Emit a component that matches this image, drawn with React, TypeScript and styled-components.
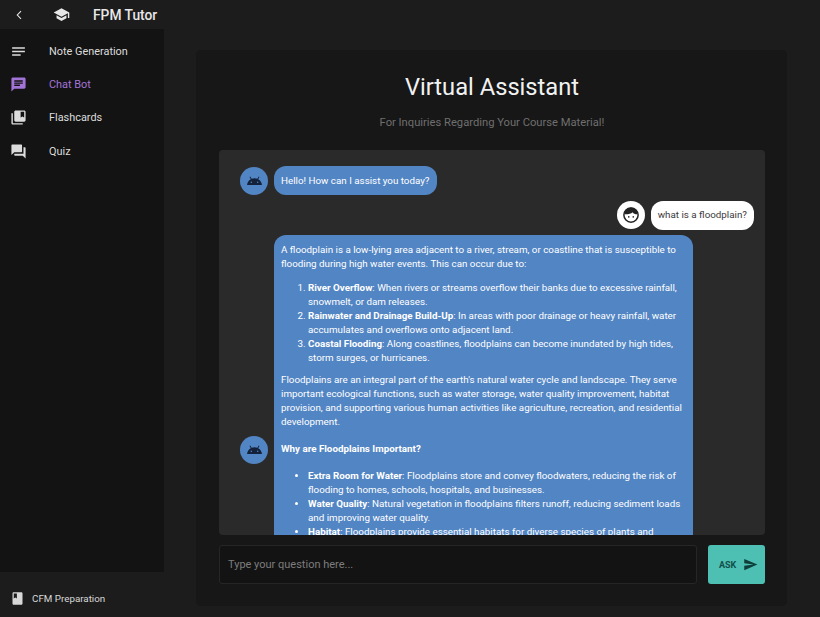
import * as React from 'react'
import styled, { createGlobalStyle } from 'styled-components'
import {
  MdArrowBackIosNew,
  MdBook,
  MdChat,
  MdCollectionsBookmark,
  MdNotes,
  MdQuestionAnswer,
  MdSchool,
  MdSend,
} from 'react-icons/md'

// ___________________________________________________________________

const GlobalStyle = createGlobalStyle`
  html, body {
    margin: 0;
    padding: 0;
    height: 617px;
    overflow: hidden;
    background: #1c1c1c;
    font-family: Roboto, "Liberation Sans", sans-serif;
  }
`

const Page = styled.div`
  width: 820px;
  height: 617px;
  display: grid;
  grid-template-columns: 164px 1fr;
  background: #1c1c1c;
  overflow: hidden;
`

const Side = styled.aside`
  display: flex;
  flex-direction: column;
  height: 617px;
`

const TopBar = styled.header`
  height: 29px;
  display: flex;
  align-items: center;
  color: #e8e8e8;
`

const BackSlot = styled.span`
  width: 38px;
  display: flex;
  justify-content: center;
  font-size: 10px;
`

const LogoSlot = styled.span`
  width: 46px;
  display: flex;
  justify-content: center;
  font-size: 17px;
`

const Brand = styled.span`
  margin-left: 9px;
  font-size: 13.8px;
  font-weight: 500;
  white-space: nowrap;
`

const Nav = styled.nav`
  flex: 1;
  background: #131313;
  padding-top: 5.5px;
`

const NavItem = styled.div<{ $active?: boolean }>`
  height: 33.3px;
  display: flex;
  align-items: center;
  gap: 22px;
  padding-left: 10px;
  font-size: 10.9px;
  color: ${p => (p.$active ? '#a274d8' : '#dcdcdc')};

  svg {
    width: 17px;
    height: 17px;
    flex: none;
  }
`

const Footer = styled.footer`
  height: 45px;
  box-sizing: border-box;
  padding: 7px 0 0 10px;
  display: flex;
  align-items: center;
  gap: 7px;
  font-size: 9.8px;
  color: #d8d8d8;

  svg {
    width: 15px;
    height: 15px;
  }
`

const Main = styled.main`
  padding: 50px 33px 11px 32px;
`

const Card = styled.section`
  height: 556px;
  box-sizing: border-box;
  padding: 22px 22px 22px 23px;
  display: flex;
  flex-direction: column;
  background: #171717;
  border-radius: 5px;
`

const Title = styled.h1`
  margin: 0;
  text-align: center;
  font-size: 23.7px;
  line-height: 30px;
  font-weight: 400;
  color: #f2f2f2;
`

const Subtitle = styled.p`
  margin: 14px 0 0;
  text-align: center;
  font-size: 11.2px;
  line-height: 14px;
  color: #6f6f6f;
`

const ChatArea = styled.div`
  margin-top: 20px;
  height: 385px;
  box-sizing: border-box;
  padding: 16px 11px 0 21px;
  background: #2a2a2a;
  border-radius: 4px;
  overflow: hidden;
  display: flex;
  flex-direction: column;
  gap: 5.5px;
`

const Row = styled.div<{ $user?: boolean }>`
  display: flex;
  flex: none;
  align-items: center;
  gap: 6px;
  justify-content: ${p => (p.$user ? 'flex-end' : 'flex-start')};
`

const Avatar = styled.div<{ $user?: boolean }>`
  width: 28px;
  height: 28px;
  flex: none;
  border-radius: 50%;
  display: flex;
  align-items: center;
  justify-content: center;
  background: ${p => (p.$user ? '#ffffff' : '#5285c4')};
`

const Bubble = styled.div<{ $user?: boolean; $wide?: boolean }>`
  box-sizing: border-box;
  padding: ${p => (p.$wide ? '7.5px 9px 7.5px 7px' : '7.5px 7px')};
  border-radius: 12px;
  font-size: 9.8px;
  line-height: 14px;
  max-width: 419px;
  background: ${p => (p.$user ? '#ffffff' : '#5285c4')};
  color: ${p => (p.$user ? '#3a3a3a' : '#ffffff')};

  p {
    margin: 0 0 10px;
  }
  ol {
    margin: 10px 0 8px;
    padding-left: 27px;
  }
  ul {
    margin: 10px 0;
    padding-left: 27px;
  }
  b {
    font-weight: 700;
  }
`

const Heading = styled.p`
  && {
    margin: 13px 0;
  }
  font-weight: 700;
`

const InputRow = styled.div`
  margin-top: 10px;
  display: flex;
  gap: 11px;
  height: 39px;
`

const Input = styled.div`
  flex: 1;
  display: flex;
  align-items: center;
  padding-left: 8px;
  font-size: 11px;
  color: #7d7d7d;
  background: #131313;
  border: 1px solid #262626;
  border-radius: 3px;
`

const AskButton = styled.button`
  width: 57px;
  display: flex;
  align-items: center;
  gap: 7px;
  padding: 0 0 0 11px;
  border: 0;
  border-radius: 3px;
  background: #4dbfb3;
  color: #12504a;
  font-family: inherit;
  font-size: 9px;
  font-weight: 700;

  svg {
    width: 15px;
    height: 15px;
    color: #0f3f3b;
  }
`

const BotIcon = () => (
  <svg width="17" height="17" viewBox="0 0 24 24" fill="#14213a">
    <path d="M1.5 18.5a10.5 10.5 0 0 1 5.3-8.400L5 7l1-.6 1.9 3.200a10.600 10.600 0 0 1 8.200 0L18 6.400l1 .6-1.800 3.100a10.500 10.500 0 0 1 5.300 8.400z" />
    <circle cx="7.500" cy="14.500" r="1.100" fill="#5285c4" />
    <circle cx="16.500" cy="14.500" r="1.100" fill="#5285c4" />
  </svg>
)

const UserIcon = () => (
  <svg width="18" height="18" viewBox="0 0 24 24">
    <circle cx="12" cy="12" r="9.500" fill="#fff" stroke="#222" strokeWidth="2" />
    <path
      fill="#222"
      d="M3 11a9 9 0 0 1 18 0c-3 .3-5.500-.8-7-2.800-1.800 2-6.500 3.300-11 2.800z"
    />
    <circle cx="9" cy="14.500" r="1.100" fill="#222" />
    <circle cx="15" cy="14.500" r="1.100" fill="#222" />
  </svg>
)

const items = [
  { label: 'Note Generation', icon: <MdNotes /> },
  { label: 'Chat Bot', icon: <MdChat />, active: true },
  { label: 'Flashcards', icon: <MdCollectionsBookmark /> },
  { label: 'Quiz', icon: <MdQuestionAnswer /> },
]

const App = () => (
  <Page>
    <GlobalStyle />
    <Side>
      <TopBar>
        <BackSlot>
          <MdArrowBackIosNew />
        </BackSlot>
        <LogoSlot>
          <MdSchool />
        </LogoSlot>
        <Brand>FPM Tutor</Brand>
      </TopBar>
      <Nav>
        {items.map(item => (
          <NavItem key={item.label} $active={item.active}>
            {item.icon}
            <span>{item.label}</span>
          </NavItem>
        ))}
      </Nav>
      <Footer>
        <MdBook />
        CFM Preparation
      </Footer>
    </Side>
    <Main>
      <Card>
        <Title>Virtual Assistant</Title>
        <Subtitle>For Inquiries Regarding Your Course Material!</Subtitle>
        <ChatArea>
          <Row>
            <Avatar>
              <BotIcon />
            </Avatar>
            <Bubble>Hello! How can I assist you today?</Bubble>
          </Row>
          <Row $user>
            <Avatar $user>
              <UserIcon />
            </Avatar>
            <Bubble $user>what is a floodplain?</Bubble>
          </Row>
          <Row>
            <Avatar>
              <BotIcon />
            </Avatar>
            <Bubble $wide>
              <p>
                A floodplain is a low-lying area adjacent to a river, stream, or coastline that is
                susceptible to flooding during high water events. This can occur due to:
              </p>
              <ol>
                <li>
                  <b>River Overflow</b>: When rivers or streams overflow their banks due to
                  excessive rainfall, snowmelt, or dam releases.
                </li>
                <li>
                  <b>Rainwater and Drainage Build-Up</b>: In areas with poor drainage or heavy
                  rainfall, water accumulates and overflows onto adjacent land.
                </li>
                <li>
                  <b>Coastal Flooding</b>: Along coastlines, floodplains can become inundated by
                  high tides, storm surges, or hurricanes.
                </li>
              </ol>
              <p>
                Floodplains are an integral part of the earth's natural water cycle and landscape.
                They serve important ecological functions, such as water storage, water quality
                improvement, habitat provision, and supporting various human activities like
                agriculture, recreation, and residential development.
              </p>
              <Heading>Why are Floodplains Important?</Heading>
              <ul>
                <li>
                  <b>Extra Room for Water</b>: Floodplains store and convey floodwaters, reducing
                  the risk of flooding to homes, schools, hospitals, and businesses.
                </li>
                <li>
                  <b>Water Quality</b>: Natural vegetation in floodplains filters runoff, reducing
                  sediment loads and improving water quality.
                </li>
                <li>
                  <b>Habitat</b>: Floodplains provide essential habitats for diverse species of
                  plants and animals, many of which depend on seasonal flooding for survival and
                  reproduction throughout the year.
                </li>
              </ul>
              <p>
                Protecting floodplains helps communities lower flood damage, safeguard clean water
                and keep local ecosystems healthy for future generations. Leaving these areas open
                also gives rivers space to spread out, which slows floodwaters and recharges
                groundwater supplies during and after major storms, while offering residents
                parks, trails and other shared green spaces close to home.
              </p>
            </Bubble>
          </Row>
        </ChatArea>
        <InputRow>
          <Input>Type your question here...</Input>
          <AskButton>
            ASK
            <MdSend />
          </AskButton>
        </InputRow>
      </Card>
    </Main>
  </Page>
)

export default App
